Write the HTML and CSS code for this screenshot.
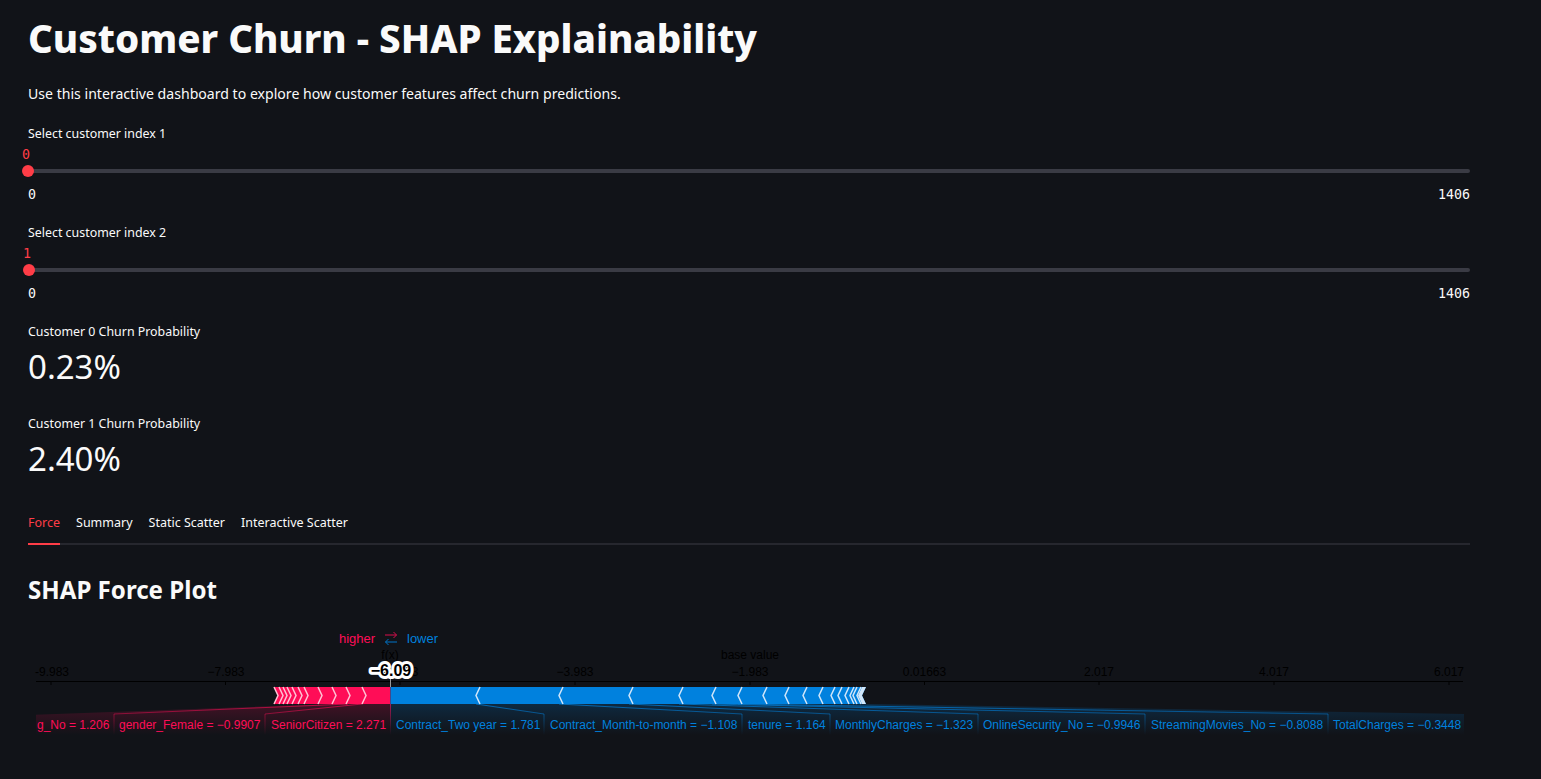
FILE: index.html
```html
<!DOCTYPE html>
<html lang="en">

<head>
    <meta charset="UTF-8">
    <meta name="viewport" content="width=device-width, initial-scale=1.0">
    <title>Customer Churn - SHAP Explainability</title>
    <link rel="stylesheet" href="styles.css">
</head>

<body>
    <main class="page">
        <h1 class="title">Customer Churn - SHAP Explainability</h1>
        <p class="intro">Use this interactive dashboard to explore how customer features affect churn predictions.</p>

        <div class="field">
            <div class="field-label">Select customer index 1</div>
            <div class="slider">
                <div class="slider-track">
                    <div class="slider-thumb" style="left: 0px;"><span class="slider-value">0</span></div>
                </div>
                <div class="slider-ticks"><span>0</span><span>1406</span></div>
            </div>
        </div>

        <div class="field">
            <div class="field-label">Select customer index 2</div>
            <div class="slider">
                <div class="slider-track">
                    <div class="slider-thumb" style="left: 1px;"><span class="slider-value">1</span></div>
                </div>
                <div class="slider-ticks"><span>0</span><span>1406</span></div>
            </div>
        </div>

        <div class="metric">
            <div class="field-label">Customer 0 Churn Probability</div>
            <div class="metric-value">0.23%</div>
        </div>

        <div class="metric">
            <div class="field-label">Customer 1 Churn Probability</div>
            <div class="metric-value">2.40%</div>
        </div>

        <div class="tabs">
            <div class="tab tab-active">Force</div>
            <div class="tab">Summary</div>
            <div class="tab">Static Scatter</div>
            <div class="tab">Interactive Scatter</div>
        </div>

        <h2 class="section-title">SHAP Force Plot</h2>

        <!-- viewBox uses page coordinates so the plot numbers are easy to read off -->
        <svg class="force-plot" viewBox="28 620 1442 130" width="1442" height="130">
            <defs>
                <linearGradient id="fadeRed" gradientUnits="userSpaceOnUse" x1="0" y1="704" x2="0" y2="735">
                    <stop offset="0" stop-color="#ff0d57" stop-opacity="0.2"></stop>
                    <stop offset="1" stop-color="#ff0d57" stop-opacity="0"></stop>
                </linearGradient>
                <linearGradient id="fadeBlue" gradientUnits="userSpaceOnUse" x1="0" y1="704" x2="0" y2="735">
                    <stop offset="0" stop-color="#0081de" stop-opacity="0.2"></stop>
                    <stop offset="1" stop-color="#0081de" stop-opacity="0"></stop>
                </linearGradient>
                <linearGradient id="lineRed" gradientUnits="userSpaceOnUse" x1="0" y1="704" x2="0" y2="735">
                    <stop offset="0" stop-color="#ff0d57" stop-opacity="0.65"></stop>
                    <stop offset="1" stop-color="#ff0d57" stop-opacity="0"></stop>
                </linearGradient>
                <linearGradient id="lineBlue" gradientUnits="userSpaceOnUse" x1="0" y1="704" x2="0" y2="735">
                    <stop offset="0" stop-color="#0081de" stop-opacity="0.75"></stop>
                    <stop offset="1" stop-color="#0081de" stop-opacity="0"></stop>
                </linearGradient>
                <clipPath id="plotClip">
                    <rect x="36" y="620" width="1428" height="130"></rect>
                </clipPath>
            </defs>

            <text class="dir dir-red" x="339" y="643">higher</text>
            <path class="arrow-red" d="M385 635H396.5M393.5 632L396.5 635L393.5 638"></path>
            <path class="arrow-blue" d="M397 642H385.5M388.5 639L385.5 642L388.5 645"></path>
            <text class="dir dir-blue" x="407" y="643">lower</text>

            <text class="axis-text" x="390" y="659" text-anchor="middle">f(x)</text>
            <text class="axis-text" x="750" y="659" text-anchor="middle">base value</text>

            <path class="axis" d="M36 681.5H1463"></path>
            <path class="axis" d="M51 681V685M225.5 681V685M400 681V685M575 681V685M750 681V685M924.5 681V685M1099 681V685M1274 681V685M1449 681V685"></path>
            <text class="axis-text" x="52" y="676" text-anchor="middle">-9.983</text>
            <text class="axis-text" x="226" y="676" text-anchor="middle">−7.983</text>
            <text class="axis-text" x="400" y="676" text-anchor="middle">−5.983</text>
            <text class="axis-text" x="575" y="676" text-anchor="middle">−3.983</text>
            <text class="axis-text" x="750" y="676" text-anchor="middle">−1.983</text>
            <text class="axis-text" x="924.5" y="676" text-anchor="middle">0.01663</text>
            <text class="axis-text" x="1099" y="676" text-anchor="middle">2.017</text>
            <text class="axis-text" x="1274" y="676" text-anchor="middle">4.017</text>
            <text class="axis-text" x="1449" y="676" text-anchor="middle">6.017</text>

            <path class="fx-tick" d="M390.5 677V687"></path>
            <text class="fx-value" x="391" y="676" text-anchor="middle">−6.09</text>

            <!-- links from the bar down to the labels -->
            <g clip-path="url(#plotClip)">
                <path fill="url(#fadeRed)" d="M334 704L0 716V735H114V714L348 704Z"></path>
                <path fill="url(#fadeRed)" d="M348 704L114 714V735H265V714L362 704Z"></path>
                <path fill="url(#fadeRed)" d="M362 704L265 714V735H390V704Z"></path>
                <path fill="url(#fadeBlue)" d="M390 704V735H544V714L476 704Z"></path>
                <path fill="url(#fadeBlue)" d="M476 704L544 714V735H742V714L559 704Z"></path>
                <path fill="url(#fadeBlue)" d="M559 704L742 714V735H830V714L629 704Z"></path>
                <path fill="url(#fadeBlue)" d="M629 704L830 714V735H978V714L679 704Z"></path>
                <path fill="url(#fadeBlue)" d="M679 704L978 714V735H1145V714L712 704Z"></path>
                <path fill="url(#fadeBlue)" d="M712 704L1145 714V735H1328V714L738 704Z"></path>
                <path fill="url(#fadeBlue)" d="M738 704L1328 714V735H1470V714L866 704Z"></path>

                <path class="link-red" d="M348 704L114 714V735"></path>
                <path class="link-red" d="M362 704L265 714V735"></path>
                <path class="link-red" d="M390.5 704V735"></path>
                <path class="link-blue" d="M476 704L544 714V735"></path>
                <path class="link-blue" d="M559 704L742 714V735"></path>
                <path class="link-blue" d="M629 704L830 714V735"></path>
                <path class="link-blue" d="M679 704L978 714V735"></path>
                <path class="link-blue" d="M712 704L1145 714V735"></path>
                <path class="link-blue" d="M738 704L1328 714V735"></path>

                <text class="label label-red" x="37" y="729">g_No = 1.206</text>
            </g>

            <!-- the bar itself -->
            <path class="bar-red" d="M274 687H390.5V704H274L278 695.5Z"></path>
            <path class="bar-blue" d="M390.5 687H866L862 695.5L866 704H390.5Z"></path>
            <path class="chev-red" d="M274 687L278 695.5L274 704M279 687L283 695.5L279 704M283 687L287 695.5L283 704M287 687L291 695.5L287 704M292 687L296 695.5L292 704M298 687L302 695.5L298 704M304 687L308 695.5L304 704M318 687L322 695.5L318 704M332 687L336 695.5L332 704M346 687L350 695.5L346 704M362 687L366 695.5L362 704"></path>
            <path class="chev-blue" d="M480 687L476 695.5L480 704M563 687L559 695.5L563 704M633 687L629 695.5L633 704M683 687L679 695.5L683 704M716 687L712 695.5L716 704M742 687L738 695.5L742 704M767 687L763 695.5L767 704M789 687L785 695.5L789 704M807 687L803 695.5L807 704M823 687L819 695.5L823 704M835 687L831 695.5L835 704M842 687L838 695.5L842 704M849 687L845 695.5L849 704M854 687L850 695.5L854 704M857 687L853 695.5L857 704M861 687L857 695.5L861 704"></path>
            <path class="bar-end" d="M862 687H866L862 695.5L866 704H862L858 695.5Z"></path>

            <text class="label label-red" x="119" y="729">gender_Female = −0.9907</text>
            <text class="label label-red" x="271" y="729">SeniorCitizen = 2.271</text>
            <text class="label label-blue" x="396" y="729">Contract_Two year = 1.781</text>
            <text class="label label-blue" x="550" y="729">Contract_Month-to-month = −1.108</text>
            <text class="label label-blue" x="748" y="729">tenure = 1.164</text>
            <text class="label label-blue" x="835" y="729">MonthlyCharges = −1.323</text>
            <text class="label label-blue" x="983" y="729">OnlineSecurity_No = −0.9946</text>
            <text class="label label-blue" x="1151" y="729">StreamingMovies_No = −0.8088</text>
            <text class="label label-blue" x="1333" y="729">TotalCharges = −0.3448</text>
        </svg>
    </main>
</body>

</html>
```

FILE: styles.css
```css
* {
    margin: 0;
    padding: 0;
    box-sizing: border-box;
}

body {
    background-color: #111318;
    color: #fafafa;
    font-family: "Noto Sans", "Open Sans", sans-serif;
}

.page {
    width: 1442px;
    margin-left: 28px;
    padding-top: 14px;
}

.title {
    font-size: 38.5px;
    font-weight: 800;
    line-height: 48px;
}

.intro {
    height: 24px;
    margin-top: 19px;
    font-size: 14.1px;
    line-height: 26px;
}

.field {
    margin-top: 18px;
}

.field + .field {
    margin-top: 19px;
}

.field-label {
    height: 20px;
    font-size: 12.4px;
    line-height: 22px;
}

.slider {
    height: 60px;
    padding-top: 26px;
}

.slider-track {
    position: relative;
    height: 4px;
    border-radius: 2px;
    background-color: #3a3b44;
}

.slider-thumb {
    position: absolute;
    top: -4px;
    width: 12px;
    height: 12px;
    margin-left: -6px;
    border-radius: 50%;
    background-color: #ff3d47;
}

.slider-value {
    position: absolute;
    left: -2px;
    top: -20px;
    width: 12px;
    text-align: center;
    color: #ff3d47;
    font-family: "DejaVu Sans Mono", monospace;
    font-size: 13.3px;
    line-height: 20px;
}

.slider-ticks {
    display: flex;
    justify-content: space-between;
    margin-top: 12px;
    font-family: "DejaVu Sans Mono", monospace;
    font-size: 13.3px;
    line-height: 20px;
}

.metric {
    margin-top: 19px;
}

.metric + .metric {
    margin-top: 22px;
}

.metric-value {
    margin-top: 2px;
    font-size: 33px;
    line-height: 48px;
}

.tabs {
    display: flex;
    gap: 16px;
    margin-top: 18px;
    border-bottom: 2px solid #26272e;
}

.tab {
    height: 44px;
    margin-bottom: -2px;
    font-size: 12.5px;
    line-height: 44px;
}

.tab-active {
    color: #ff3d47;
    border-bottom: 2px solid #ff3d47;
}

.section-title {
    margin-top: 25px;
    font-size: 24.1px;
    font-weight: 700;
    line-height: 40px;
}

.force-plot {
    display: block;
    margin-top: 10px;
    font-family: "Liberation Sans", Arial, sans-serif;
}

.dir {
    font-size: 13px;
}

.dir-red,
.label-red {
    fill: #ff0d57;
}

.dir-blue,
.label-blue {
    fill: #0081de;
}

.arrow-red,
.arrow-blue {
    fill: none;
    stroke-width: 1;
}

.arrow-red {
    stroke: #d80f4c;
}

.arrow-blue {
    stroke: #0074c8;
}

.axis {
    fill: none;
    stroke: #000000;
    stroke-width: 1;
}

.axis-text {
    fill: #000000;
    font-size: 12px;
}

.fx-tick {
    stroke: #9a9a9a;
    stroke-width: 1;
}

.fx-value {
    fill: #000000;
    stroke: #ffffff;
    stroke-width: 6px;
    stroke-linejoin: round;
    paint-order: stroke;
    font-size: 16px;
    font-weight: 700;
}

.bar-red {
    fill: #ff0d57;
}

.bar-blue {
    fill: #0081de;
}

.chev-red,
.chev-blue {
    fill: none;
    stroke-width: 1.5;
}

.chev-red {
    stroke: #ffc3d5;
}

.chev-blue {
    stroke: #d1e6fa;
}

.bar-end {
    fill: #d1e6fa;
}

.link-red,
.link-blue {
    fill: none;
    stroke-width: 1;
}

.link-red {
    stroke: url(#lineRed);
}

.link-blue {
    stroke: url(#lineBlue);
}

.label {
    font-size: 12px;
}
```
